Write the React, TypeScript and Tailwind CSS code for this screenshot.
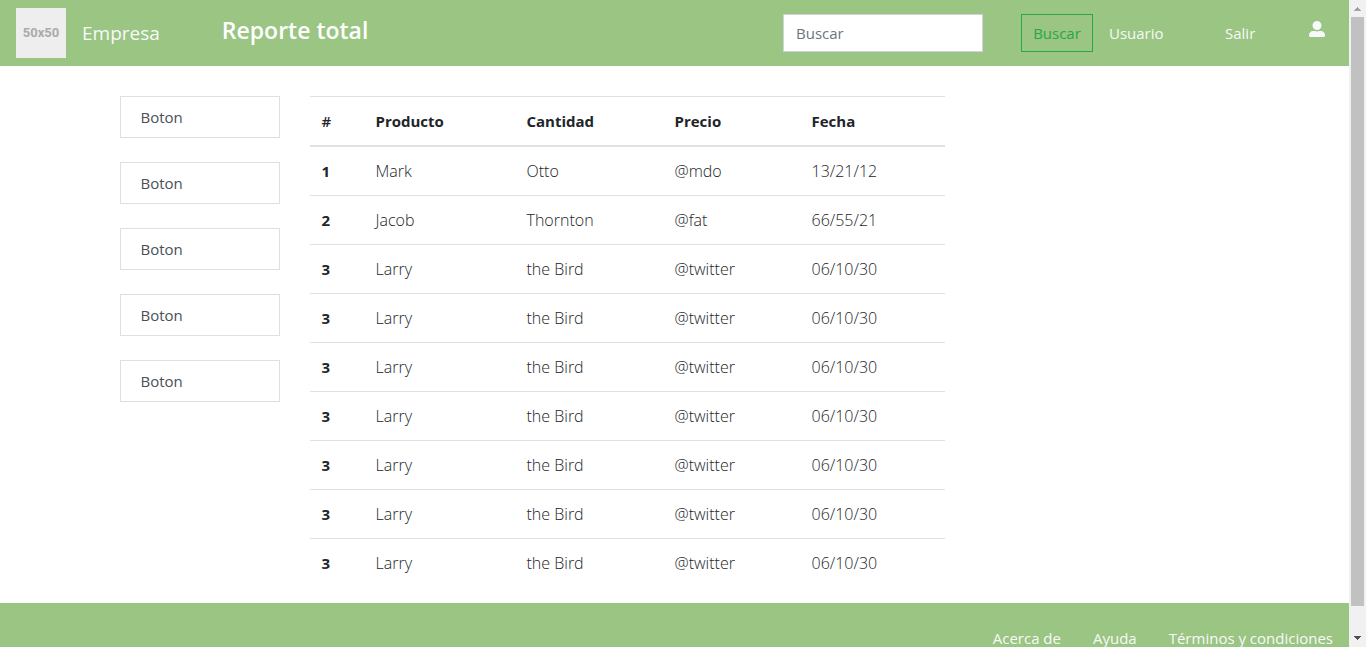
import { FaUserAlt } from "react-icons/fa";

const rows = [
  ["1", "Mark", "Otto", "@mdo", "13/21/12"],
  ["2", "Jacob", "Thornton", "@fat", "66/55/21"],
  ...Array.from({ length: 7 }, () => ["3", "Larry", "the Bird", "@twitter", "06/10/30"]),
];

const buttons = ["Boton", "Boton", "Boton", "Boton", "Boton"];

function Navbar() {
  return (
    <nav className="flex items-center bg-[#9ac582] px-4 py-2 text-[#f8f9fa]">
      <a href="#" className="flex items-center gap-4">
        <span className="flex size-[50px] items-center justify-center bg-[#eeeeee] font-['Roboto'] text-[13px] font-bold text-[#aaaaaa]">
          50x50
        </span>
        <span className="text-[19px] leading-7">Empresa</span>
      </a>
      <h1 className="ml-[62px] pb-1.5 text-[23px] leading-7 font-semibold text-white">Reporte total</h1>
      <form className="ml-auto flex items-center" onSubmit={(e) => e.preventDefault()}>
        <input
          type="search"
          aria-label="Buscar"
          placeholder="Buscar"
          className="h-[38px] w-[200px] border border-[#ced4da] bg-white px-3 text-[15px] text-[#495057] placeholder:text-[#6c757d]"
        />
        <button type="submit" className="ml-[38px] h-[38px] w-[72px] border border-[#28a745] text-[15px] text-[#28a745]">
          Buscar
        </button>
      </form>
      <div className="flex items-center pl-4 text-[15px]">
        <a href="#" className="w-[116px]">Usuario</a>
        <a href="#" className="w-[84px]">Salir</a>
        <a href="#" aria-label="Perfil" className="mr-2 pb-2">
          <FaUserAlt className="size-4" />
        </a>
      </div>
    </nav>
  );
}

function Report() {
  return (
    <table className="w-full table-fixed border-collapse text-left text-[15px] leading-6 text-[#212529]">
      <colgroup>
        <col className="w-[54px]" />
        <col className="w-[151px]" />
        <col className="w-[148px]" />
        <col className="w-[137px]" />
        <col />
      </colgroup>
      <thead>
        <tr className="border-t border-b-2 border-[#dee2e6]">
          {["#", "Producto", "Cantidad", "Precio", "Fecha"].map((h) => (
            <th key={h} scope="col" className="p-3 font-bold first:font-semibold">{h}</th>
          ))}
        </tr>
      </thead>
      <tbody>
        {rows.map(([id, ...cells], i) => (
          <tr key={i} className="border-t border-[#dee2e6]">
            <th scope="row" className="p-3 font-bold">{id}</th>
            {cells.map((c) => (
              <td key={c} className="p-3 text-[16px] leading-6 font-light">{c}</td>
            ))}
          </tr>
        ))}
      </tbody>
    </table>
  );
}

function ScrollBar() {
  return (
    <div aria-hidden="true" className="flex w-[17px] shrink-0 flex-col items-center bg-[#f1f1f1]">
      <svg className="h-[17px] w-[17px] shrink-0" viewBox="0 0 17 17" fill="#a3a3a3" shapeRendering="crispEdges">
        <path d="M8 7h1v1h1v1h1v1h1v1H5v-1h1V9h1V8h1z" />
      </svg>
      <div className="w-[13px] grow bg-[#c1c1c1]" />
      <svg className="mt-6 h-[17px] w-[17px] shrink-0" viewBox="0 0 17 17" fill="#505050" shapeRendering="crispEdges">
        <path d="M5 6h7v1h-1v1h-1v1H9v1H8V9H7V8H6V7H5z" />
      </svg>
    </div>
  );
}

export default function App() {
  return (
    <div className="flex h-screen overflow-hidden bg-white font-['Open_Sans',sans-serif]">
      <div className="min-w-0 grow overflow-hidden">
        <Navbar />
        <main className="mx-auto grid max-w-[1140px] grid-cols-12 gap-[30px] px-[15px] pt-[30px] pb-4">
          <aside className="col-span-2 flex flex-col gap-6">
            {buttons.map((b, i) => (
              <button key={i} type="button" className="h-[42px] border border-[#dfdfdf] px-5 text-left text-[15px] text-[#495057]">
                {b}
              </button>
            ))}
          </aside>
          <section className="col-span-7">
            <Report />
          </section>
        </main>
        <footer className="flex justify-end gap-8 bg-[#9ac582] px-4 pt-[23px] pb-6 text-[15px] leading-6 text-[#f8f9fa]">
          <a href="#">Acerca de</a>
          <a href="#">Ayuda</a>
          <a href="#">Términos y condiciones</a>
        </footer>
      </div>
      <ScrollBar />
    </div>
  );
}
